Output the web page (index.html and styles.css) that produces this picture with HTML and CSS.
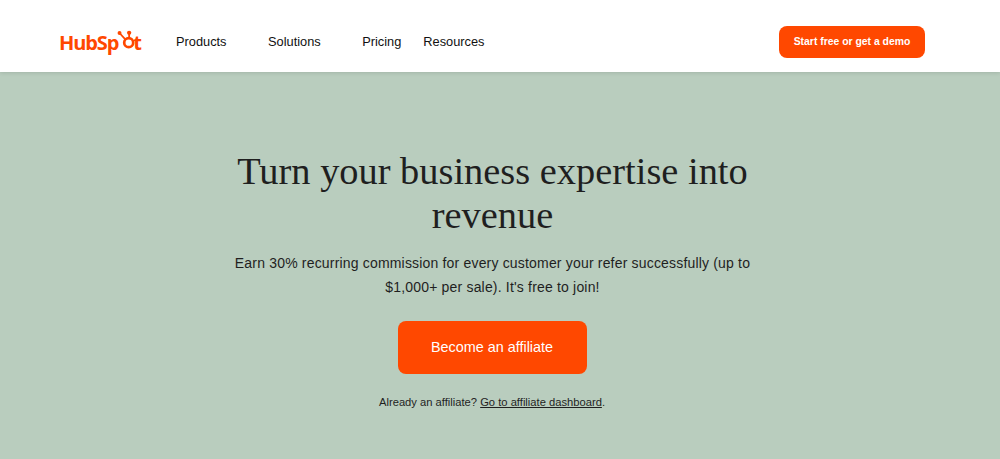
FILE: index.html
```html
<!DOCTYPE html>
<html lang="en">
<head>
    <meta charset="UTF-8">
    <meta name="viewport" content="width=device-width, initial-scale=1.0">
    <title>HubSpot Affiliate Program</title>
    <link rel="stylesheet" href="styles.css">
</head>
<body>
<header class="site-header">
    <a class="logo" href="#">HubSp<svg class="logo-sprocket" viewBox="0 0 20 22" aria-hidden="true">
        <circle cx="13" cy="14" r="5" fill="none" stroke="#ff4800" stroke-width="3"/>
        <path d="M13.5 8V3M9 10 3 3.5" fill="none" stroke="#ff4800" stroke-width="2"/>
        <circle cx="13.5" cy="3" r="2.4" fill="#ff4800"/>
        <circle cx="2.8" cy="3.2" r="2.2" fill="#ff4800"/>
    </svg>t</a>
    <nav class="main-nav">
        <a class="nav-link has-menu" href="#">Products</a>
        <a class="nav-link has-menu" href="#">Solutions</a>
        <a class="nav-link" href="#">Pricing</a>
        <a class="nav-link" href="#">Resources</a>
    </nav>
    <a class="cta-small" href="#">Start free or get a demo</a>
</header>
<main class="hero">
    <h1>Turn your business expertise into revenue</h1>
    <p class="lead">Earn 30% recurring commission for every customer your refer successfully (up to $1,000+ per sale). It's free to join!</p>
    <a class="cta-large" href="#">Become an affiliate</a>
    <p class="note">Already an affiliate? <a href="#">Go to affiliate dashboard</a>.</p>
</main>
</body>
</html>
```

FILE: styles.css
```css
body {
    margin: 0;
    font-family: "Liberation Sans", Arial, sans-serif;
    background-color: #b9cdbe;
    color: #1f1f1f;
}
a {
    color: inherit;
    text-decoration: none;
}
.site-header {
    display: flex;
    align-items: center;
    box-sizing: border-box;
    height: 72px;
    padding: 12px 75px 0 60px;
    background: white;
    box-shadow: 0 1px 4px rgba(0, 0, 0, 0.12);
}
.logo {
    display: flex;
    align-items: center;
    width: 117px;
    margin-left: -1px;
    font-family: "Open Sans", sans-serif;
    font-size: 20px;
    font-weight: 700;
    letter-spacing: -1.1px;
    color: #ff4800;
}
.logo-sprocket {
    width: 18px;
    height: 20px;
    margin: -4px -2px 0 -1px;
}
.main-nav {
    display: flex;
    gap: 22px;
    margin-top: -2px;
    font-size: 12.8px;
    color: #111;
}
.nav-link.has-menu {
    margin-right: 19.5px;
}
.cta-small {
    margin-left: auto;
    padding: 10px 14px;
    background: #ff4800;
    color: white;
    font-size: 10.4px;
    line-height: 12px;
    font-weight: bold;
    border-radius: 8px;
    width: 118px;
    white-space: nowrap;
    text-align: center;
}
.hero {
    display: flex;
    flex-direction: column;
    align-items: center;
    height: 387px;
    padding: 77px 16px 0 0;
    box-sizing: border-box;
}
.hero h1 {
    width: 560px;
    margin: 0 0 0 1px;
    font-family: "Liberation Serif", "Times New Roman", serif;
    font-size: 38.4px;
    line-height: 44px;
    font-weight: normal;
    text-align: center;
}
.lead {
    width: 530px;
    margin: 14px 0 0 1px;
    font-size: 14px;
    line-height: 24px;
    letter-spacing: 0.18px;
    text-align: center;
}
.cta-large {
    width: 189px;
    margin-top: 22px;
    padding: 18px 0;
    background: #ff4800;
    color: white;
    font-size: 14.4px;
    line-height: 17px;
    border-radius: 8px;
    text-align: center;
}
.note {
    margin: 21px 0 0;
    font-size: 11.2px;
    line-height: 14px;
}
.note a {
    text-decoration: underline;
}
```
